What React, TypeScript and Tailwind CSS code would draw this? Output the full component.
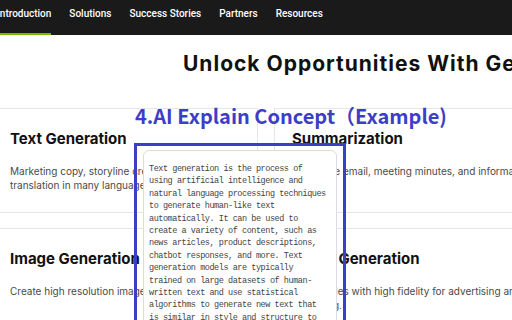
import React from 'react';

const navItems = ['Introduction', 'Solutions', 'Success Stories', 'Partners', 'Resources'];

const explainLines = [
  'Text generation is the process of',
  'using artificial intelligence and',
  'natural language processing techniques',
  'to generate human-like text',
  'automatically. It can be used to',
  'create a variety of content, such as',
  'news articles, product descriptions,',
  'chatbot responses, and more. Text',
  'generation models are typically',
  'trained on large datasets of human-',
  'written text and use statistical',
  'algorithms to generate new text that',
  'is similar in style and structure to',
  'the data it was trained on.',
];

function Card({ title, children, wide }: { title: string; children: React.ReactNode; wide?: boolean }) {
  return (
    <div
      className={`${wide ? 'w-[300px]' : 'w-[266px]'} h-[105px] shrink-0 bg-white border border-[#e6e6e6] pl-[17px] pt-[20px]`}
    >
      <h3 className="text-[15px] leading-[20px] font-bold text-[#111] whitespace-nowrap">{title}</h3>
      <p className="mt-[15px] text-[10px] leading-[14px] text-[#4a4a4a] whitespace-nowrap">{children}</p>
    </div>
  );
}

export default function App() {
  return (
    <div className="relative w-[512px] h-[320px] overflow-hidden bg-white font-['Inter',sans-serif]">
      {/* top nav */}
      <nav className="h-[35px] bg-[#1a1a1a] flex items-start -ml-[3px]">
        {navItems.map((item, i) => (
          <div key={item} className="relative h-full mr-[18px] flex items-start pt-[6px]">
            <span className="text-[10px] leading-[16px] font-medium text-white font-['Roboto',sans-serif]">{item}</span>
            {i === 0 && <div className="absolute left-0 right-0 bottom-0 h-[2px] bg-[#76b900]" />}
          </div>
        ))}
      </nav>

      {/* heading */}
      <h1 className="pl-[183px] pt-[17px] text-[21px] leading-[24px] tracking-[1px] font-bold text-[#111] whitespace-nowrap">
        Unlock Opportunities With Generative AI
      </h1>

      {/* cards */}
      <div className="mt-[32px] -ml-[8px] flex flex-col gap-[15px]">
        <div className="flex gap-[16px]">
          <Card title="Text Generation">
            Marketing copy, storyline creation, and
            <br />
            translation in many languages.
          </Card>
          <Card title="Summarization" wide>
            Condense email, meeting minutes, and information from
          </Card>
        </div>
        <div className="flex gap-[16px]">
          <Card title="Image Generation">Create high resolution images from text descriptions.</Card>
          <Card title="Video Generation" wide>
            Create titles with high fidelity for advertising and
            <br />
            marketing.
          </Card>
        </div>
      </div>

      {/* annotation overlay */}
      <div className="absolute left-[135px] top-[102px] text-[20px] leading-[28px] font-bold text-[#3b3fc6] whitespace-nowrap font-['Noto_Sans_CJK_SC',sans-serif]">
        4.AI Explain Concept（Example)
      </div>
      <div className="absolute left-[134px] top-[143px] w-[212px] h-[200px] border-[3px] border-[#3b3fc6]" />
      <div className="absolute left-[143px] top-[150px] w-[194px] h-[200px] bg-white border border-[#dcdcdc] rounded-md pl-[5px] pt-[12px]">
        <div className="text-[8.5px] leading-[12.4px] tracking-[-0.45px] text-[#444] whitespace-pre font-['Liberation_Mono',monospace]">
          {explainLines.join('\n')}
        </div>
      </div>
    </div>
  );
}
